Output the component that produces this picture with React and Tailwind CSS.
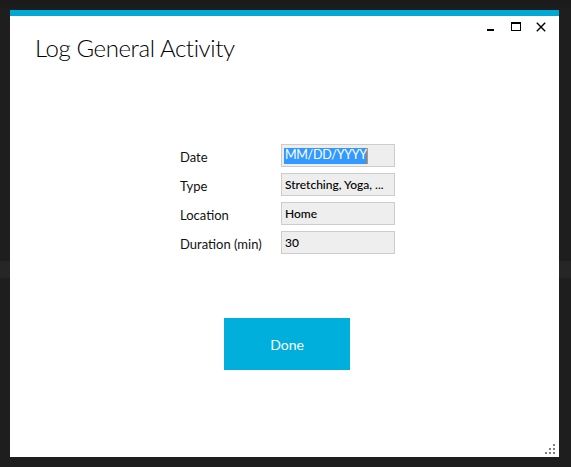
import React from "react";

function Controls() {
  return (
    <div className="absolute right-[13px] top-[12px] flex items-start">
      <svg width="8" height="10" viewBox="0 0 8 10" className="mr-[16px]">
        <rect x="0" y="7" width="7" height="2" fill="#000" />
      </svg>
      <svg width="10" height="10" viewBox="0 0 10 10" className="mr-[15px]">
        <rect x="0.5" y="0.5" width="9" height="8" fill="none" stroke="#000" strokeWidth="1" />
        <rect x="0" y="0" width="10" height="2" fill="#000" />
      </svg>
      <svg width="10" height="10" viewBox="0 0 10 10">
        <path d="M0.8 0.8 L9.2 9.2 M9.2 0.8 L0.8 9.2" stroke="#000" strokeWidth="1.4" fill="none" />
      </svg>
    </div>
  );
}

function Grip() {
  const dots = [
    [8, 0],
    [4, 4],
    [8, 4],
    [0, 8],
    [4, 8],
    [8, 8],
  ];
  return (
    <svg width="10" height="10" viewBox="0 0 10 10" className="absolute right-[4px] bottom-[3px]">
      {dots.map(([x, y], i) => (
        <rect key={i} x={x} y={y} width="2" height="2" fill="#808080" />
      ))}
    </svg>
  );
}

export default function App() {
  const font = { fontFamily: 'Lato, "Open Sans", sans-serif' };
  const rows = [
    ["Date", "MM/DD/YYYY"],
    ["Type", "Stretching, Yoga, ..."],
    ["Location", "Home"],
    ["Duration (min)", "30"],
  ];
  return (
    <div
      className="h-[467px] w-[571px] pt-[10px] pl-[10px] pr-[12px] pb-[10px] bg-[linear-gradient(to_bottom,#1a1a1a_0px,#1e1e1e_10px,#1e1e1e_261px,#262626_261px,#262626_278px,#1e1e1e_278px)]"
      style={font}
    >
      <div className="relative flex h-full flex-col bg-white">
        <div className="h-[6px] bg-[#00a9d5]" />
        <Controls />
        <h1 className="ml-[25px] mt-[20px] text-[24px] leading-[24px] font-light text-black whitespace-nowrap tracking-[-0.4px]">
          Log General Activity
        </h1>
        <div className="ml-[170px] mt-[84px] grid grid-cols-[101px_114px] gap-y-[6px]">
          {rows.map(([label, value], i) => (
            <React.Fragment key={label}>
              <div className="flex h-[23px] items-center whitespace-nowrap text-[13px] leading-[16px] text-[#111]">
                <span className="translate-y-[1px]">{label}</span>
              </div>
              <div className="flex h-[23px] items-center overflow-hidden whitespace-nowrap border border-[#cccccc] bg-[#eeeeee] pl-[2px] text-[12px] font-medium text-black">
                {i === 0 ? (
                  <span className="flex h-[16px] items-center bg-[#3399ff] pl-[1px] text-[12.5px] text-white font-normal tracking-[-0.3px] border-r border-r-[#ff8800]">
                    {value}
                  </span>
                ) : (
                  <span className="pl-[1px]">{value}</span>
                )}
              </div>
            </React.Fragment>
          ))}
        </div>
        <button className="ml-[214px] mt-[64px] flex h-[52px] w-[126px] items-center justify-center bg-[#00afdb] text-[14px] font-normal text-white">
          Done
        </button>
        <Grip />
      </div>
    </div>
  );
}
